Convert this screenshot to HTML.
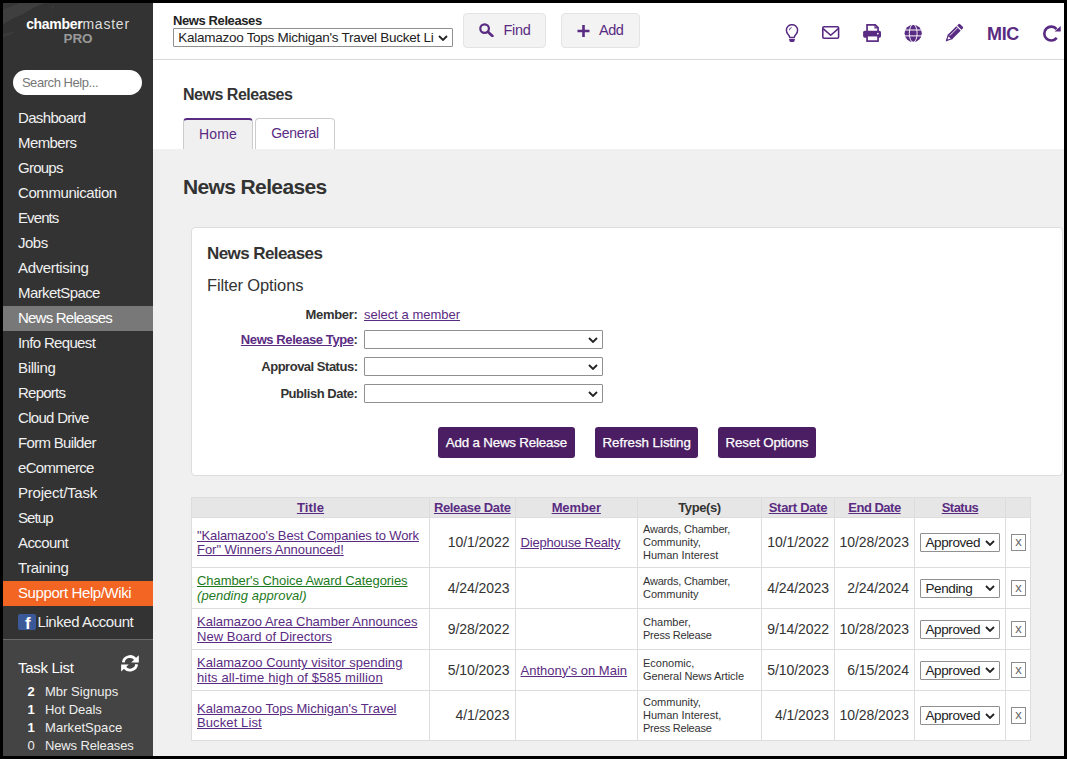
<!DOCTYPE html>
<html lang="en">
<head>
<meta charset="utf-8">
<title>News Releases</title>
<style>
*{box-sizing:border-box;margin:0;padding:0}
html,body{width:1067px;height:759px;overflow:hidden;background:#000}
body{font-family:"Liberation Sans",Arial,sans-serif;font-size:13px;color:#333;position:relative}
a{color:#5a2b82}
#frame{position:absolute;left:3px;top:3px;width:1061px;height:753px;background:#f0f0f0;overflow:hidden}
#side{position:absolute;left:0;top:0;width:150px;height:753px;background:#333;overflow:hidden}
.stk{position:absolute;background:#3d3d3d;transform:rotate(-24deg);transform-origin:0 0}
#logo1{position:absolute;left:0;top:13.300px;width:150px;text-align:center;font-size:14px;line-height:16px;color:#ddd;letter-spacing:0.78px;white-space:nowrap}
#logo1 b{color:#fff;letter-spacing:-0.3px}
#logo2{position:absolute;left:0;top:28px;width:150px;text-align:center;font-size:13.5px;line-height:16px;color:#999;font-weight:bold;letter-spacing:-0.1px}
#search{position:absolute;left:10.4px;top:67.2px;width:129px;height:25.3px;border-radius:13px;background:#fff;color:#777;font-size:13px;line-height:26px;padding-left:8.5px;letter-spacing:-0.44px}
#menu{position:absolute;left:0;top:103px;width:150px;list-style:none}
#menu li{height:25px;line-height:24px;padding-left:15px;color:#f0f0f0;font-size:15px;white-space:nowrap}
#menu li.cur{background:#787878;color:#fff}
#menu li.help{background:#f26522;color:#fff}
#fb{position:absolute;left:15px;top:610.500px;width:18px;height:16px;background:#3b5998;border-radius:2px;overflow:hidden}
#fb span{position:absolute;left:7px;top:1px;font-size:17px;line-height:18px;font-weight:bold;color:#fff;font-family:"Liberation Sans",sans-serif}
#linked{position:absolute;left:34.500px;top:606px;font-size:15px;line-height:25px;color:#f0f0f0;white-space:nowrap;letter-spacing:-0.42px}
#tasks{position:absolute;left:0;top:636px;width:150px;height:117px;background:#444;border-top:1px solid #6a6a6a}
#tasks h4{position:absolute;left:15px;top:18px;font-size:15px;font-weight:normal;color:#fff;line-height:20px;letter-spacing:-0.3px}
#tasks .r{position:absolute;left:0;width:150px;height:18px;line-height:18px;font-size:13px;color:#eee;white-space:nowrap}
#tasks .r b{position:absolute;left:18px;width:20px;text-align:center;color:#fff}
#tasks .r span{position:absolute;left:42px}
#top{position:absolute;left:150px;top:0;width:911px;height:57px;background:#fff;border-bottom:1px solid #d9d9d9}
#top .lbl{position:absolute;left:20px;top:10px;font-weight:bold;font-size:13px;line-height:15px;color:#222;letter-spacing:-0.4px}
.sel{position:absolute;background:#fff;border:1px solid #909090;border-radius:1px;font-size:13.5px;color:#222;white-space:nowrap;overflow:hidden}
.sel svg{position:absolute;right:4.300px;top:50%;margin-top:-3px}
.tbtn{position:absolute;top:10px;height:35px;background:#f3f3f3;border:1px solid #e4e4e4;border-radius:4px;color:#5a2b82;font-size:14.5px;line-height:33px;white-space:nowrap}
.tbtn svg{position:absolute}
.tbtn span{position:absolute;top:0}
.ico{position:absolute}
#mic{position:absolute;left:834px;top:19px;font-size:18px;line-height:24px;font-weight:bold;color:#5a2b82;letter-spacing:-0.35px}
#sub{position:absolute;left:150px;top:57px;width:911px;height:89px;background:#fff}
#sub h2{position:absolute;left:30px;top:25px;font-size:16px;line-height:20px;color:#333;font-weight:bold;letter-spacing:-0.48px;white-space:nowrap}
.tab{position:absolute;border:1px solid #ccc;border-bottom:none;border-radius:4px 4px 0 0;text-align:center;color:#5a2b82;font-size:14px;background:#fff;letter-spacing:-0.3px}
.tab.on{background:#f0f0f0;border-top:2px solid #5a2b82}
#h1{position:absolute;left:180px;top:171px;font-size:21px;line-height:26px;font-weight:bold;color:#333;letter-spacing:-0.63px;white-space:nowrap}
#panel{position:absolute;left:188px;top:224px;width:872px;height:249px;background:#fff;border:1px solid #ddd;border-radius:4px}
#panel h3{position:absolute;left:15px;top:15px;font-size:17px;line-height:20px;font-weight:bold;color:#333;letter-spacing:-0.58px;white-space:nowrap}
#panel h4{position:absolute;left:15px;top:45.600px;font-size:16.5px;line-height:20px;font-weight:normal;color:#333;letter-spacing:-0.13px;white-space:nowrap}
.fl{position:absolute;left:0;width:165.500px;text-align:right;font-weight:bold;font-size:13px;line-height:16px;color:#333;white-space:nowrap;letter-spacing:-0.35px}
.pbtn{position:absolute;top:198px;height:30.800px;background:#4b1e64;border-radius:3px;color:#fff;font-size:13.33px;line-height:31.800px;text-align:center;white-space:nowrap;letter-spacing:-0.15px;-webkit-text-stroke:0.250px #fff}
#grid{position:absolute;left:188px;top:494px;border-collapse:collapse;table-layout:fixed;width:839px;background:#fff}
#grid th,#grid td{border:1px solid #ddd;font-size:13px;padding:0}
#grid th{height:20px;background:#e6e6e6;font-weight:bold;color:#333;text-align:center;line-height:15px;letter-spacing:-0.3px}
#grid td{vertical-align:middle;line-height:15px;color:#333}
#grid td.t{padding-top:1.600px;padding-left:5px;text-align:left;letter-spacing:0;white-space:nowrap;line-height:14.500px}
#grid td.d{padding-top:0.800px;padding-right:5px;text-align:right;font-size:14px;letter-spacing:-0.06px}
#grid td.m{padding-top:0.800px;padding-left:5px;text-align:left;font-size:13px;letter-spacing:0;white-space:nowrap}
#grid td.ty{padding-left:5px;font-size:11px;line-height:13px;color:#333;letter-spacing:0;white-space:nowrap}
#grid td.s,#grid td.x{position:relative}
#grid .sel{left:5px;top:50%;margin-top:-9.500px;width:80px;height:19px;line-height:17px;padding-left:4.500px;font-size:13.5px;letter-spacing:-0.4px}
.xb{position:absolute;left:5px;top:50%;margin-top:-8.500px;width:15px;height:16.500px;border:1px solid #8c8c8c;background:#fff;color:#666;font-size:13px;line-height:14.400px;text-align:center}
#grid td.grn,#grid td.grn a{color:#1c7a1c}
</style>
</head>
<body>
<div id="frame">

<div id="side">
  <svg class="ico" style="left:0;top:0" width="60" height="40" viewBox="0 0 60 40"><path d="M0 0h16.800L0 6.500z" fill="#373737"/><path d="M0 6.500L16.800 0H41.300L30 5L21 10.500L9 16L0 21.500z" fill="#3f3f3f"/><path d="M0 31L11 28.600L11.500 29.500L0 34.300z" fill="#3c3c3c"/><path d="M48 3.200h3.200l-1.600 3.600z" fill="#3c3c3c"/></svg>
  <div id="logo1"><b>chamber</b>master</div>
  <div id="logo2">PRO</div>
  <div id="search">Search Help...</div>
  <ul id="menu">
    <li style="letter-spacing:-0.65px">Dashboard</li>
    <li style="letter-spacing:-0.6px">Members</li>
    <li style="letter-spacing:-0.75px">Groups</li>
    <li style="letter-spacing:-0.42px">Communication</li>
    <li style="letter-spacing:-0.9px">Events</li>
    <li style="letter-spacing:-0.5px">Jobs</li>
    <li style="letter-spacing:-0.33px">Advertising</li>
    <li style="letter-spacing:-0.6px">MarketSpace</li>
    <li class="cur" style="letter-spacing:-0.78px">News Releases</li>
    <li style="letter-spacing:-0.66px">Info Request</li>
    <li style="letter-spacing:-0.35px">Billing</li>
    <li style="letter-spacing:-0.75px">Reports</li>
    <li style="letter-spacing:-0.7px">Cloud Drive</li>
    <li style="letter-spacing:-0.68px">Form Builder</li>
    <li style="letter-spacing:-0.66px">eCommerce</li>
    <li style="letter-spacing:-0.22px">Project/Task</li>
    <li style="letter-spacing:-0.9px">Setup</li>
    <li style="letter-spacing:-0.6px">Account</li>
    <li style="letter-spacing:-0.4px">Training</li>
    <li class="help" style="letter-spacing:-0.4px">Support Help/Wiki</li>
  </ul>
  <div id="fb"><span>f</span></div>
  <div id="linked">Linked Account</div>
  <div id="tasks">
    <h4>Task List</h4>
    <svg class="ico" style="left:118px;top:15px" width="18" height="17" viewBox="0 0 18 17"><path d="M2.32 7.36A6.75 6.75 0 0 1 14.53 4.43" fill="none" stroke="#fff" stroke-width="2.800"/><path d="M17.800 0.200v7.200h-7.600z" fill="#fff"/><path d="M15.68 9.24A6.75 6.75 0 0 1 3.47 12.17" fill="none" stroke="#fff" stroke-width="2.800"/><path d="M0.100 16.400v-7h7.700z" fill="#fff"/></svg>
    <div class="r" style="top:42.600px"><b>2</b><span style="letter-spacing:0.02px">Mbr Signups</span></div>
    <div class="r" style="top:60.800px"><b>1</b><span style="letter-spacing:-0.03px">Hot Deals</span></div>
    <div class="r" style="top:78.800px"><b>1</b><span style="letter-spacing:0.06px">MarketSpace</span></div>
    <div class="r" style="top:97px"><b style="font-weight:normal;color:#eee">0</b><span style="letter-spacing:-0.13px">News Releases</span></div>
  </div>
</div>

<div id="top">
  <div class="lbl">News Releases</div>
  <div class="sel" style="left:20px;top:25px;width:280px;height:19px;line-height:17px;padding-left:4.300px;letter-spacing:-0.27px">Kalamazoo Tops Michigan's Travel Bucket Li<svg width="10" height="6" viewBox="0 0 10 6"><path d="M1 1l4 4 4-4" fill="none" stroke="#222" stroke-width="1.8" stroke-linecap="butt"/></svg></div>
  <div class="tbtn" style="left:310px;width:83px"><svg style="left:15px;top:9.200px" width="15" height="14" viewBox="0 0 15 14"><circle cx="5.600" cy="5.600" r="4.300" fill="none" stroke="#5a2b82" stroke-width="2.200"/><path d="M8.800 8.800l4.600 4.200" stroke="#5a2b82" stroke-width="2.600" stroke-linecap="round"/></svg><span style="left:39.5px;letter-spacing:-0.3px">Find</span></div>
  <div class="tbtn" style="left:408px;width:79px"><svg style="left:15px;top:11px" width="13" height="12" viewBox="0 0 13 12"><path d="M6.500 0v12M0.500 6h12" stroke="#5a2b82" stroke-width="2.600"/></svg><span style="left:37px;letter-spacing:-0.5px">Add</span></div>

  <svg class="ico" style="left:632px;top:21px" width="14" height="19" viewBox="0 0 14 19"><path d="M4.700 13.500c-0.100-1.300-0.700-2.300-1.700-3.300A5.600 5.600 0 1 1 11 10.200c-1 1-1.600 2-1.700 3.300z" fill="none" stroke="#5a2b82" stroke-width="1.500" stroke-linejoin="round"/><path d="M4.300 6.300a2.900 2.900 0 0 1 2.400-2.700" fill="none" stroke="#5a2b82" stroke-width="0.900"/><path d="M4 14.900h6l-0.500 2.200a1 1 0 0 1-1 0.800h-3a1 1 0 0 1-1-0.800z" fill="#5a2b82"/></svg>
  <svg class="ico" style="left:669px;top:23px" width="18" height="14" viewBox="0 0 18 14"><rect x="0.800" y="0.800" width="15.800" height="11.500" rx="1.200" fill="none" stroke="#5a2b82" stroke-width="1.600"/><path d="M1.100 2.600L8.700 9.300L16.300 2.600" fill="none" stroke="#5a2b82" stroke-width="1.600"/></svg>
  <svg class="ico" style="left:710px;top:21px" width="18" height="19" viewBox="0 0 18 19"><path d="M4.050 7.500V0.850H12.200L15.050 3.700V7.500" fill="none" stroke="#5a2b82" stroke-width="1.700"/><path d="M12 0.850V3.900H15.050" fill="none" stroke="#5a2b82" stroke-width="1.100"/><rect x="0.100" y="6.650" width="17.900" height="7.050" rx="1.600" fill="#5a2b82"/><rect x="4.050" y="11.600" width="11" height="5.500" fill="#fff" stroke="#5a2b82" stroke-width="1.700"/><rect x="14.100" y="8.900" width="1.500" height="1.500" fill="#fff"/></svg>
  <svg class="ico" style="left:751px;top:21px" width="19" height="19" viewBox="0 0 19 19"><circle cx="9.200" cy="9.300" r="8.600" fill="#5a2b82"/><g fill="none" stroke="#fff"><ellipse cx="9.200" cy="9.300" rx="3.900" ry="8.900" stroke-width="0.900"/><path d="M0 6h19M0 11.900h19" stroke-width="1"/></g></svg>
  <svg class="ico" style="left:791.450px;top:19.800px" width="20" height="20" viewBox="-10 -10 20 20"><g transform="translate(-0.300 0.300) rotate(45) scale(1.060)"><path d="M-2.900 -7.500v-1.700a1.200 1.200 0 0 1 1.200 -1.200h3.400a1.200 1.200 0 0 1 1.200 1.200v1.700z" fill="#5a2b82"/><rect x="-2.900" y="-6.400" width="5.800" height="11.400" fill="#5a2b82"/><path d="M-2.350 5.000L0 9.600L2.350 5.000z" fill="#fff" stroke="#5a2b82" stroke-width="1.100" stroke-linejoin="miter"/><path d="M-0.900 8.200L0 10.300L0.900 8.200z" fill="#5a2b82"/><path d="M-1.100 -6.400v10.500" stroke="#fff" stroke-width="0.800"/></g></svg>
  <svg class="ico" style="left:888px;top:20px" width="22" height="20" viewBox="0 0 22 20"><path d="M15.570 6.080A6.950 6.950 0 1 0 15.730 14.830" fill="none" stroke="#5a2b82" stroke-width="2.600"/><path d="M19.700 2.900v5.600h-6.100z" fill="#5a2b82"/></svg>

  <div id="mic">MIC</div>
</div>

<div id="sub">
  <h2>News Releases</h2>
  <div class="tab on" style="left:30px;top:58px;width:70px;height:31px;line-height:29.500px;letter-spacing:0.2px">Home</div>
  <div class="tab" style="left:102px;top:58px;width:80px;height:31px;line-height:29.500px">General</div>
</div>

<div id="h1">News Releases</div>

<div id="panel"><div style="position:absolute;left:0;top:1px;width:870px;height:246px">
  <h3>News Releases</h3>
  <h4>Filter Options</h4>
  <div class="fl" style="top:78px;letter-spacing:-0.3px">Member:</div>
  <div class="fl" style="top:103px;letter-spacing:-0.41px"><a href="#">News Release Type</a>:</div>
  <div class="fl" style="top:130px;letter-spacing:-0.49px">Approval Status:</div>
  <div class="fl" style="top:157px;letter-spacing:-0.46px">Publish Date:</div>
  <a href="#" style="position:absolute;left:172px;top:78px;font-size:13px;line-height:16px;letter-spacing:0;white-space:nowrap">select a member</a>
  <div class="sel" style="left:171.800px;top:101px;width:239.700px;height:19px"><svg width="10" height="6" viewBox="0 0 10 6"><path d="M1 1l4 4 4-4" fill="none" stroke="#222" stroke-width="1.8" stroke-linecap="butt"/></svg></div>
  <div class="sel" style="left:171.800px;top:128px;width:239.700px;height:19px"><svg width="10" height="6" viewBox="0 0 10 6"><path d="M1 1l4 4 4-4" fill="none" stroke="#222" stroke-width="1.8" stroke-linecap="butt"/></svg></div>
  <div class="sel" style="left:171.800px;top:155.300px;width:239.700px;height:19px"><svg width="10" height="6" viewBox="0 0 10 6"><path d="M1 1l4 4 4-4" fill="none" stroke="#222" stroke-width="1.8" stroke-linecap="butt"/></svg></div>
  <div class="pbtn" style="left:245.600px;width:137.600px;letter-spacing:-0.18px">Add a News Release</div>
  <div class="pbtn" style="left:403.200px;width:103px;letter-spacing:-0.04px">Refresh Listing</div>
  <div class="pbtn" style="left:526.200px;width:97.600px;letter-spacing:-0.13px">Reset Options</div>
</div></div>

<table id="grid">
  <colgroup><col style="width:238px"><col style="width:85.500px"><col style="width:122.500px"><col style="width:124px"><col style="width:73px"><col style="width:80px"><col style="width:91px"><col style="width:25px"></colgroup>
  <tr><th><a href="#" style="letter-spacing:0.15px">Title</a></th><th><a href="#" style="letter-spacing:-0.36px">Release Date</a></th><th><a href="#" style="letter-spacing:-0.1px">Member</a></th><th style="letter-spacing:-0.4px">Type(s)</th><th><a href="#" style="letter-spacing:-0.28px">Start Date</a></th><th><a href="#" style="letter-spacing:-0.51px">End Date</a></th><th><a href="#" style="letter-spacing:-0.52px">Status</a></th><th></th></tr>
  <tr style="height:50px"><td class="t"><a href="#"><span style="letter-spacing:-0.11px">"Kalamazoo's Best Companies to Work</span><br><span style="letter-spacing:-0.04px">For" Winners Announced!</span></a></td><td class="d">10/1/2022</td><td class="m"><a href="#" style="letter-spacing:-0.18px">Diephouse Realty</a></td><td class="ty"><span style="letter-spacing:-0.2px">Awards, Chamber,</span><br>Community,<br>Human Interest</td><td class="d">10/1/2022</td><td class="d">10/28/2023</td><td class="s"><div class="sel">Approved<svg width="10" height="6" viewBox="0 0 10 6"><path d="M1 1l4 4 4-4" fill="none" stroke="#222" stroke-width="1.8" stroke-linecap="butt"/></svg></div></td><td class="x"><div class="xb">x</div></td></tr>
  <tr style="height:41px"><td class="t grn"><a href="#" style="letter-spacing:-0.06px">Chamber's Choice Award Categories</a><br><i style="letter-spacing:0.07px">(pending approval)</i></td><td class="d">4/24/2023</td><td class="m"></td><td class="ty"><span style="letter-spacing:-0.2px">Awards, Chamber,</span><br>Community</td><td class="d">4/24/2023</td><td class="d">2/24/2024</td><td class="s"><div class="sel">Pending<svg width="10" height="6" viewBox="0 0 10 6"><path d="M1 1l4 4 4-4" fill="none" stroke="#222" stroke-width="1.8" stroke-linecap="butt"/></svg></div></td><td class="x"><div class="xb">x</div></td></tr>
  <tr style="height:41px"><td class="t"><a href="#">Kalamazoo Area Chamber Announces<br><span style="letter-spacing:0.03px">New Board of Directors</span></a></td><td class="d">9/28/2022</td><td class="m"></td><td class="ty">Chamber,<br><span style="letter-spacing:-0.23px">Press Release</span></td><td class="d">9/14/2022</td><td class="d">10/28/2023</td><td class="s"><div class="sel">Approved<svg width="10" height="6" viewBox="0 0 10 6"><path d="M1 1l4 4 4-4" fill="none" stroke="#222" stroke-width="1.8" stroke-linecap="butt"/></svg></div></td><td class="x"><div class="xb">x</div></td></tr>
  <tr style="height:41px"><td class="t"><a href="#"><span style="letter-spacing:0.05px">Kalamazoo County visitor spending</span><br><span style="letter-spacing:0.13px">hits all-time high of $585 million</span></a></td><td class="d">5/10/2023</td><td class="m"><a href="#">Anthony's on Main</a></td><td class="ty">Economic,<br><span style="letter-spacing:-0.09px">General News Article</span></td><td class="d">5/10/2023</td><td class="d">6/15/2024</td><td class="s"><div class="sel">Approved<svg width="10" height="6" viewBox="0 0 10 6"><path d="M1 1l4 4 4-4" fill="none" stroke="#222" stroke-width="1.8" stroke-linecap="butt"/></svg></div></td><td class="x"><div class="xb">x</div></td></tr>
  <tr style="height:50px"><td class="t"><a href="#">Kalamazoo Tops Michigan's Travel<br><span style="letter-spacing:0.11px">Bucket List</span></a></td><td class="d">4/1/2023</td><td class="m"></td><td class="ty">Community,<br>Human Interest,<br><span style="letter-spacing:-0.23px">Press Release</span></td><td class="d">4/1/2023</td><td class="d">10/28/2023</td><td class="s"><div class="sel">Approved<svg width="10" height="6" viewBox="0 0 10 6"><path d="M1 1l4 4 4-4" fill="none" stroke="#222" stroke-width="1.8" stroke-linecap="butt"/></svg></div></td><td class="x"><div class="xb">x</div></td></tr>
</table>

</div>
</body>
</html>
